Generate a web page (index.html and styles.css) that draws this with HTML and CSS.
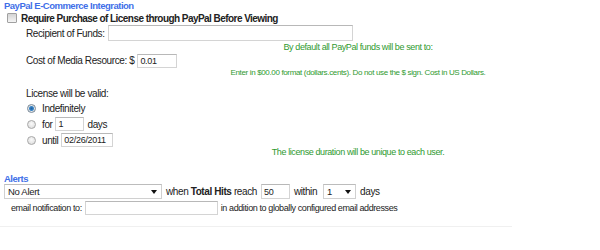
FILE: index.html
```html
<!DOCTYPE html>
<html lang="en">
<head>
    <meta charset="UTF-8">
    <title>Media Settings</title>
    <link rel="stylesheet" href="styles.css">
</head>
<body>
    <div class="section">
        <h2 class="legend">PayPal E-Commerce Integration</h2>
        <label class="check-row"><input type="checkbox" class="check"> Require Purchase of License through PayPal Before Viewing</label>

        <div class="field recipient-row">
            <span>Recipient of Funds:</span>
            <input type="text" class="txt recipient">
        </div>
        <div class="hint first">By default all PayPal funds will be sent to:</div>

        <div class="field cost-row">
            <span>Cost of Media Resource: $</span>
            <input type="text" class="txt cost" value="0.01">
        </div>
        <div class="hint small">Enter in $00.00 format (dollars.cents). Do not use the $ sign. Cost in US Dollars.</div>

        <div class="valid-title">License will be valid:</div>
        <div class="radios">
            <label class="radio-row"><input type="radio" class="radio" name="valid" checked> Indefinitely</label>
            <label class="radio-row"><input type="radio" class="radio" name="valid"> for <input type="text" class="txt days" value="1"> days</label>
            <label class="radio-row"><input type="radio" class="radio" name="valid"> until <input type="text" class="txt date" value="02/26/2011"></label>
        </div>
        <div class="hint dur">The license duration will be unique to each user.</div>
    </div>

    <div class="section alerts">
        <h2 class="legend">Alerts</h2>
        <div class="alert-row">
            <span class="sel-wrap alert-type"><select class="sel"><option>No Alert</option></select></span>
            <span>when <strong>Total Hits</strong> reach</span>
            <input type="text" class="txt hits" value="50">
            <span>within</span>
            <span class="sel-wrap within"><select class="sel"><option>1</option></select></span>
            <span>days</span>
        </div>
        <div class="email-row">
            <span>email notification to:</span>
            <input type="text" class="txt email">
            <span>in addition to globally configured email addresses</span>
        </div>
    </div>
    <hr class="rule">
</body>
</html>
```

FILE: styles.css
```css
body { margin: 0; font-family: "Liberation Sans", Arial, sans-serif; font-size: 10px; letter-spacing: -0.4px; color: #222; background: #fff; }
.section { padding-left: 4px; }
.legend { margin: 0; font-size: 9.5px; letter-spacing: -0.5px; line-height: 11px; color: #3f6fe8; font-weight: bold; }

.check-row { display: flex; align-items: center; gap: 4px; height: 12px; margin-top: 1px; font-weight: bold; letter-spacing: -0.55px; }
.check { appearance: none; margin: 0 0 0 3px; width: 10px; height: 10px; border: 1px solid #a0a0a0; border-radius: 1px; background: linear-gradient(#d4d4d4, #f4f4f4); box-sizing: border-box; }

.field { display: flex; align-items: center; gap: 3px; padding-left: 22px; }
.recipient-row { height: 16px; margin-top: 1px; }
.cost-row { height: 15px; }

.txt { box-sizing: border-box; height: 14px; border: 1px solid #d4d4d4; border-top-color: #b8b8b8; font-family: "Liberation Sans", Arial, sans-serif; font-size: 9px; letter-spacing: -0.3px; padding: 0 2px; margin: 0; color: #222; background: #fff; }
.recipient { width: 245px; height: 16px; }
.cost { width: 40px; }

.hint { padding-left: 112px; text-align: center; color: #2f9a2f; font-size: 9px; line-height: 10px; }
.hint.first { line-height: 12px; }
.hint.small { font-size: 8px; letter-spacing: -0.35px; }
.hint.dur { margin-top: -1px; }

.valid-title { padding-left: 22px; margin-top: 10px; line-height: 12px; }
.radios { padding-left: 23px; }
.radio-row { display: flex; align-items: center; gap: 3px; height: 16px; }
.radio { appearance: none; margin: 0 3px 0 0; width: 9px; height: 9px; border-radius: 50%; border: 1px solid #a8a8a8; background: radial-gradient(circle at 50% 40%, #fafafa, #d8d8d8); box-sizing: border-box; }
.radio:checked { border-color: #7a8a9a; background: radial-gradient(circle, #1f5fa0 0, #3a86c8 2px, #e6e6e6 3px, #d0d0d0 100%); }
.days { width: 29px; }
.date { width: 52px; }

.alerts { margin-top: 16px; }
.alert-row { display: flex; align-items: center; gap: 4px; height: 15px; }
.sel-wrap { position: relative; display: inline-block; height: 15px; }
.sel-wrap::after { content: ""; position: absolute; right: 5px; top: 6px; border-left: 3px solid transparent; border-right: 3px solid transparent; border-top: 4px solid #111; }
.sel { appearance: none; box-sizing: border-box; width: 100%; height: 15px; border: 1px solid #d0d0d0; border-top-color: #bcbcbc; font-family: "Liberation Sans", Arial, sans-serif; font-size: 9.5px; letter-spacing: -0.3px; background: #fff; margin: 0; padding: 0 3px; color: #222; }
.alert-type { width: 158px; }
.hits { width: 29px; height: 15px; }
.within { width: 33px; margin-left: 2px; }

.email-row { display: flex; align-items: center; gap: 3px; padding-left: 7px; height: 15px; margin-top: 1px; font-size: 9px; }
.email { width: 133px; }

.rule { margin: 11px 0 0; width: 512px; border: 0; border-top: 1px solid #f0f0f0; }
```
